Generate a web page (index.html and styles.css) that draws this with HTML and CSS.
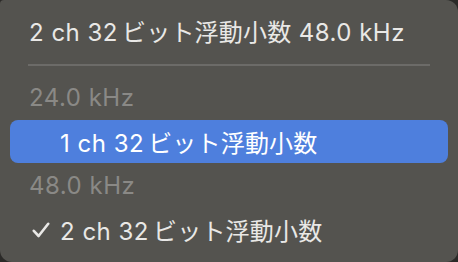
FILE: index.html
```html
<!DOCTYPE html>
<html lang="ja">
<head>
    <meta charset="UTF-8">
    <meta name="viewport" content="width=device-width, initial-scale=1.0">
    <title>フォーマット</title>
    <link rel="stylesheet" href="styles.css">
</head>
<body>
    <div class="menu">
        <div class="menu-title">2 ch 32<span class="kana">ビット浮動小数</span> 48.0 kHz</div>
        <div class="separator"></div>
        <div class="menu-header">24.0 kHz</div>
        <div class="menu-item active">
            <span class="check"></span>
            <span>1 ch 32<span class="kana">ビット浮動小数</span></span>
        </div>
        <div class="menu-header">48.0 kHz</div>
        <div class="menu-item">
            <span class="check">
                <svg width="18" height="16" viewBox="0 0 18 16"><path d="M1.8 8.8 L6.6 14 L16.2 1.8" fill="none" stroke="#e9e8e6" stroke-width="2.6" stroke-linecap="round" stroke-linejoin="round"/></svg>
            </span>
            <span>2 ch 32<span class="kana">ビット浮動小数</span></span>
        </div>
    </div>
</body>
</html>
```

FILE: styles.css
```css
* {
    margin: 0;
    padding: 0;
    box-sizing: border-box;
}

body {
    width: 458px;
    height: 262px;
    background: #2b2a28;
    font-family: Inter, "Noto Sans CJK JP", sans-serif;
    overflow: hidden;
}

.menu {
    width: 458px;
    height: 262px;
    background: #54534f;
    border-radius: 4px 12px 12px 12px;
    padding: 11px 10px 10px 10px;
    color: #e9e8e6;
    font-size: 24px;
    letter-spacing: 0.5px;
}

.kana {
    margin-left: 4px;
    letter-spacing: 0.2px;
}

.menu-title {
    height: 44px;
    line-height: 44px;
    padding-left: 19px;
    white-space: nowrap;
}

.separator {
    height: 2px;
    margin: 9px 18px 10px 18px;
    background: #6c6b68;
}

.menu-header {
    height: 44px;
    line-height: 44px;
    padding-left: 19px;
    color: #8a8986;
}

.menu-item {
    display: flex;
    align-items: center;
    height: 43px;
    margin-bottom: 1px;
    padding-left: 22px;
    border-radius: 8px;
    white-space: nowrap;
}

.menu-item.active {
    background: #4e7fdd;
    color: #ffffff;
}

.check {
    display: flex;
    align-items: center;
    width: 28px;
    height: 43px;
}
```
